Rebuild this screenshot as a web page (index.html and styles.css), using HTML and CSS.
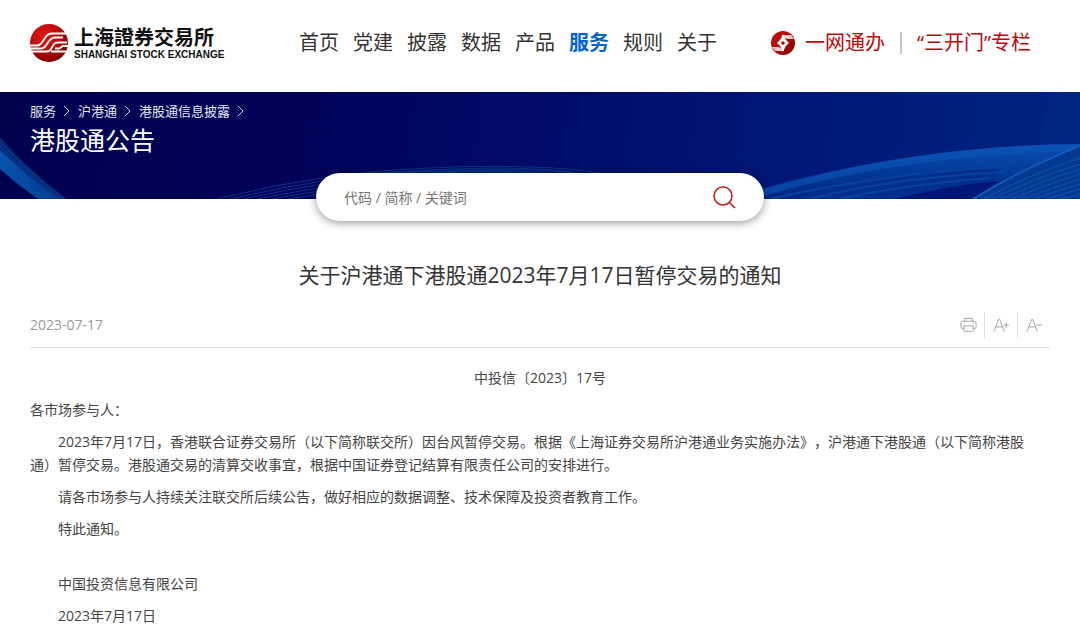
FILE: index.html
```
<!DOCTYPE html>
<html lang="zh-CN">
<head>
    <meta charset="UTF-8">
    <title>港股通公告 | 上海证券交易所</title>
    <link rel="stylesheet" href="styles.css">
</head>
<body>

<header class="header">
    <a class="logo" href="#">
        <svg class="logo-mark" viewBox="0 0 38 38" aria-hidden="true">
            <defs>
                <radialGradient id="ball" cx="35%" cy="30%" r="75%">
                    <stop offset="0" stop-color="#e01a14"/>
                    <stop offset="0.5" stop-color="#bd0a0a"/>
                    <stop offset="1" stop-color="#7d0000"/>
                </radialGradient>
            </defs>
            <circle cx="19" cy="19" r="19" fill="url(#ball)"/>
            <g fill="none" stroke="#fff" stroke-width="1.8" stroke-linejoin="round">
                <path d="M0 21.500H7C10 21.500 11 20 13 17L16 12.500C17.500 10.500 19 9.500 22 9.500H37"/>
                <path d="M0 24.500H11C14 24.500 15 23 17 20L19 17C21 14.500 22 13.500 25 13.500H33"/>
                <path d="M1 27.500H17C20 27.500 21 25 22.500 22.500C24.500 19.500 25 18.500 28 18.500H37"/>
                <path d="M21 27.500H38M25 24.500H29C31 24.500 31 22 33 22H38"/>
            </g>
        </svg>
        <span class="logo-text">
            <span class="logo-cn">上海證券交易所</span>
            <span class="logo-en">SHANGHAI STOCK EXCHANGE</span>
        </span>
    </a>

    <nav class="nav">
        <a href="#">首页</a>
        <a href="#">党建</a>
        <a href="#">披露</a>
        <a href="#">数据</a>
        <a href="#">产品</a>
        <a class="active" href="#">服务</a>
        <a href="#">规则</a>
        <a href="#">关于</a>
    </nav>

    <div class="quick-links">
        <a href="#">
            <svg class="quick-icon" viewBox="0 0 24 24" aria-hidden="true">
                <defs>
                    <linearGradient id="ring" x1="0" y1="0" x2="1" y2="1">
                        <stop offset="0" stop-color="#d01010"/>
                        <stop offset="1" stop-color="#850000"/>
                    </linearGradient>
                </defs>
                <circle cx="12" cy="12" r="12" fill="url(#ring)"/>
                <path d="M12 4H20L23 8H16Q13 7 12 4Z" fill="#efc9c9"/>
                <path d="M12 20H4L1 16H8Q11 17 12 20Z" fill="#efc9c9"/>
                <path d="M12 4Q13 9 17 12Q13 15 12 20Q11 15 7 12Q11 9 12 4Z" fill="#fff" stroke="#fff" stroke-width="1.500"/>
                <circle cx="12" cy="12" r="1.800" fill="#b30c0c"/>
            </svg>
            一网通办
        </a>
        <span class="divider"></span>
        <a href="#">“三开门”专栏</a>
    </div>
</header>

<section class="banner">
    <svg class="banner-art" viewBox="0 0 1080 107" preserveAspectRatio="none" aria-hidden="true">
        <defs>
            <linearGradient id="streak" x1="0" y1="0" x2="1" y2="0">
                <stop offset="0" stop-color="#0753ab"/>
                <stop offset="1" stop-color="#043c92"/>
            </linearGradient>
            <linearGradient id="wave" x1="0" y1="0" x2="0" y2="1">
                <stop offset="0" stop-color="#0a50b4"/>
                <stop offset="0.5" stop-color="#033a98"/>
                <stop offset="1" stop-color="#00267f"/>
            </linearGradient>
        </defs>

        <!-- left streak -->
        <path d="M0 45Q30 80 67 107H38Q18 93 0 77Z" fill="#032a78"/>
        <path d="M0 58Q28 85 58 107H38Q18 93 0 77Z" fill="url(#streak)"/>
        <path d="M0 50Q30 82 64 107M0 54Q28 84 60 107" fill="none" stroke="#0a3f91"/>

        <!-- thin lines beside and above the search box -->
        <path d="M340 84Q450 70 620 85Z" fill="#06267e"/>
        <g fill="none" stroke="#0b3489" stroke-width="1">
            <path d="M217 107Q330 78 450 75T620 85"/>
            <path d="M230 107Q340 81 450 77T610 87"/>
            <path d="M243 107Q345 84 460 79T600 88"/>
            <path d="M257 107Q345 89 460 82"/>
            <path d="M272 107Q345 93 460 85"/>
            <path d="M288 107Q350 97 460 89"/>
        </g>

        <!-- right wave -->
        <path d="M730 107Q900 53 1080 52V107H730Z" fill="url(#wave)"/>
        <path d="M740 107Q900 58 1080 56" fill="none" stroke="#0b55b8" stroke-width="7" opacity="0.6"/>
        <path d="M790 107Q890 79 1000 77Q990 95 973 107Z" fill="#022f8e"/>
        <path d="M770 107Q880 82 1010 74M810 107Q890 86 1005 80M840 107Q900 93 990 86" fill="none" stroke="#07439d" stroke-width="2"/>
        <path d="M895 107Q950 93 1000 89L973 107Z" fill="#001675"/>
        <path d="M973 107Q1020 78 1080 54V107Z" fill="#04398f"/>
        <path d="M973 107Q1020 78 1080 54" fill="none" stroke="#1364c4" stroke-width="1.500"/>
        <g fill="none" stroke="#0b56b0" stroke-width="1">
            <path d="M984 107Q1030 82 1080 66"/>
            <path d="M992 107Q1035 86 1080 72"/>
            <path d="M1001 107Q1040 89 1080 77"/>
            <path d="M1011 107Q1045 93 1080 82"/>
            <path d="M1022 107Q1050 97 1080 87"/>
            <path d="M1034 107Q1056 99 1080 92"/>
            <path d="M1047 107Q1063 102 1080 97"/>
            <path d="M1061 107L1080 102"/>
        </g>
    </svg>

    <div class="banner-content">
        <div class="breadcrumb">
            <a href="#">服务</a>
            <svg viewBox="0 0 8 12"><path d="M1 1L6 6L1 11"/></svg>
            <a href="#">沪港通</a>
            <svg viewBox="0 0 8 12"><path d="M1 1L6 6L1 11"/></svg>
            <a href="#">港股通信息披露</a>
            <svg viewBox="0 0 8 12"><path d="M1 1L6 6L1 11"/></svg>
        </div>
        <h1>港股通公告</h1>
    </div>

    <form class="search">
        <input type="text" aria-label="搜索" placeholder="代码 / 简称 / 关键词">
        <button type="button" aria-label="搜索">
            <svg viewBox="0 0 24 24"><circle cx="11" cy="11" r="9"/><path d="M17 17L23 23"/></svg>
        </button>
    </form>
</section>

<main class="article">
    <h2>关于沪港通下港股通2023年7月17日暂停交易的通知</h2>

    <div class="article-info">
        <time datetime="2023-07-17">2023-07-17</time>
        <div class="tools">
            <button type="button" aria-label="打印">
                <svg viewBox="0 0 18 18">
                    <path d="M5 5V2H13V5M4 13H3Q1 13 1 11V7Q1 5 3 5H15Q17 5 17 7V11Q17 13 15 13H14M4 10H14V14Q14 16 12 16H6Q4 16 4 14ZM13 7H15"/>
                </svg>
            </button>
            <button type="button" aria-label="放大字体">
                <svg viewBox="0 0 18 18">
                    <path d="M1 16L6 3H7L12 16M3 11H10M11 9H17M14 6V12"/>
                </svg>
            </button>
            <button type="button" aria-label="缩小字体">
                <svg viewBox="0 0 18 18">
                    <path d="M1 16L6 3H7L12 16M3 11H10M11 9H17"/>
                </svg>
            </button>
        </div>
    </div>

    <div class="article-body">
        <p class="doc-number">中投信〔2023〕17号</p>
        <p>各市场参与人：</p>
        <p class="indent">2023年7月17日，香港联合证券交易所（以下简称联交所）因台风暂停交易。根据《上海证券交易所沪港通业务实施办法》，沪港通下港股通（以下简称港股通）暂停交易。港股通交易的清算交收事宜，根据中国证券登记结算有限责任公司的安排进行。</p>
        <p class="indent">请各市场参与人持续关注联交所后续公告，做好相应的数据调整、技术保障及投资者教育工作。</p>
        <p class="indent">特此通知。</p>
        <p class="indent signature">中国投资信息有限公司</p>
        <p class="indent">2023年7月17日</p>
    </div>
</main>

</body>
</html>
```
FILE: styles.css
```
* {
    box-sizing: border-box;
}

body {
    margin: 0;
    background: #fff;
    color: #444;
    font-family: "Open Sans", "Noto Sans CJK SC", sans-serif;
    font-size: 14px;
    text-spacing-trim: space-all;
}

a {
    color: inherit;
    text-decoration: none;
}

button {
    padding: 0;
    border: none;
    background: none;
    cursor: pointer;
}

svg {
    display: block;
}

/* header */
.header {
    display: flex;
    align-items: center;
    height: 92px;
    padding: 0 49px 6px 30px;
}

.logo {
    display: flex;
    align-items: center;
    gap: 6px;
    width: 269px;
}

.logo-mark {
    width: 38px;
    height: 38px;
}

.logo-text {
    display: flex;
    flex-direction: column;
    color: #111;
    font-weight: bold;
    white-space: nowrap;
}

.logo-cn {
    font-family: "Noto Sans CJK TC", sans-serif;
    font-size: 20px;
    line-height: 24px;
}

.logo-en {
    font-family: "Liberation Sans", sans-serif;
    font-size: 10px;
    line-height: 12px;
}

.nav {
    display: flex;
    gap: 14px;
    color: #333;
    font-size: 20px;
    line-height: 30px;
    white-space: nowrap;
}

.nav .active {
    color: #0064d2;
    font-weight: bold;
}

.quick-links {
    display: flex;
    align-items: center;
    gap: 15px;
    margin-left: auto;
    color: #b90808;
    font-size: 20px;
    line-height: 30px;
    white-space: nowrap;
}

.quick-links a {
    display: flex;
    align-items: center;
    gap: 10px;
}

.quick-icon {
    width: 24px;
    height: 24px;
}

.divider {
    width: 2px;
    height: 22px;
    background: #c4c4c4;
}

/* banner */
.banner {
    position: relative;
    height: 107px;
    background: linear-gradient(100deg, #00004e 0%, #000358 28%, #000b68 50%, #001675 70%, #00257f 100%);
}

.banner-art {
    position: absolute;
    top: 0;
    left: 0;
    width: 100%;
    height: 100%;
}

.banner-content {
    position: relative;
    padding: 9px 30px 0;
    color: #fff;
}

.breadcrumb {
    display: flex;
    align-items: center;
    gap: 7px;
    color: #e2e4ee;
    font-size: 13px;
    line-height: 20px;
}

.breadcrumb svg {
    width: 8px;
    height: 12px;
    fill: none;
    stroke: #d5d8e6;
}

.banner h1 {
    margin: 0;
    font-size: 25px;
    font-weight: normal;
    line-height: 39px;
}

.search {
    position: absolute;
    bottom: -22px;
    left: 50%;
    display: flex;
    align-items: center;
    width: 448px;
    height: 48px;
    padding: 0 28px;
    border-radius: 24px;
    background: #fff;
    box-shadow: 0 2px 8px rgba(0, 0, 0, 0.4);
    transform: translateX(-50%);
}

.search input {
    flex: 1;
    padding: 0;
    border: none;
    outline: none;
    background: none;
    font-family: inherit;
    font-size: 14px;
}

.search input::placeholder {
    color: #757575;
}

.search svg {
    width: 24px;
    height: 24px;
    fill: none;
    stroke: #c11c1c;
    stroke-width: 1.5;
}

/* article */
.article {
    padding: 60px 30px 16px;
}

.article h2 {
    margin: 0;
    color: #333;
    font-size: 21px;
    font-weight: normal;
    line-height: 32px;
    text-align: center;
}

.article-info {
    display: flex;
    align-items: center;
    justify-content: space-between;
    height: 46px;
    margin-top: 11px;
    border-bottom: 1px solid #ddd;
    color: #999;
}

.tools {
    display: flex;
}

.tools button {
    padding: 4px 7px 4px 8px;
    border-left: 1px solid #ddd;
}

.tools button:first-child {
    border-left: none;
}

.tools svg {
    width: 17px;
    height: 18px;
    fill: none;
    stroke: #a0a0a0;
}

.article-body {
    padding-top: 18px;
    line-height: 23px;
}

.article-body p {
    margin: 0 0 9px;
}

.article-body .doc-number {
    text-align: center;
}

.article-body .indent {
    padding-right: 16px;
    text-indent: 2em;
}

.article-body .signature {
    margin-top: 32px;
}
```
